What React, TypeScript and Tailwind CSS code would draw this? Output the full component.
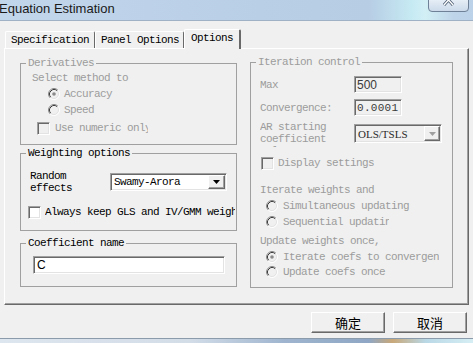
import React from "react";

const mono =
  "font-['Liberation_Mono',monospace] text-[11px] tracking-[-0.6px] leading-[12px]";
const sunken =
  "border-t border-l border-[#a0a0a0] border-b border-r border-b-white border-r-white shadow-[inset_1px_1px_0_#696969,inset_-1px_-1px_0_#e3e3e3]";
const raised =
  "border-t border-l border-white border-b border-r border-b-[#696969] border-r-[#696969] shadow-[inset_-1px_-1px_0_#a0a0a0]";

function Radio({ checked = false }: { checked?: boolean }) {
  return (
    <svg width="12" height="12" viewBox="0 0 12 12" className="shrink-0">
      <circle cx="6" cy="6" r="5" fill="#f0f0f0" />
      <path d="M2.11 9.89A5.5 5.5 0 0 1 9.89 2.11" stroke="#8a8a8a" fill="none" />
      <path d="M9.89 2.11A5.5 5.5 0 0 1 2.11 9.89" stroke="#ffffff" fill="none" />
      <path d="M2.82 9.18A4.5 4.5 0 0 1 9.18 2.82" stroke="#3c3c3c" fill="none" />
      <path d="M9.18 2.82A4.5 4.5 0 0 1 2.82 9.18" stroke="#e3e3e3" fill="none" />
      {checked && <circle cx="6" cy="6" r="1.8" fill="#8a8a8a" />}
    </svg>
  );
}

function Check({ enabled = false }: { enabled?: boolean }) {
  return (
    <div
      className={
        "w-[13px] h-[13px] shrink-0 " +
        sunken +
        (enabled ? " bg-white" : " bg-[#f0f0f0]")
      }
    />
  );
}

function Arrow({ color }: { color: string }) {
  return (
    <svg width="7" height="4" viewBox="0 0 7 4">
      <path d="M0 0h7L3.5 4z" fill={color} />
    </svg>
  );
}

export default function App() {
  return (
    <div className={"relative w-[473px] h-[343px] overflow-hidden bg-[#f0f0f0] flex flex-col text-black " + mono}>
      {/* title bar */}
      <div className="relative h-[21px] shrink-0 border-b border-[#9fb1c4] bg-[linear-gradient(90deg,#c2d6eb_0%,#b9cfe6_55%,#b7cde4_78%,#c6eaf3_87%,#d2eff5_90%,#bed4e9_96%,#bcd2e8_100%)]">
        <div className="ml-[-1px] pt-[1px] font-['Liberation_Sans',sans-serif] text-[13px] leading-[16px] tracking-normal text-[#1a1a1a]">
          Equation Estimation
        </div>
        <div className="absolute right-[4px] top-[-2px] w-[41px] h-[14px] rounded-b-[4px] border border-[#6f8197] bg-[linear-gradient(180deg,#e8eff7,#cbdaea)] flex justify-center overflow-hidden">
          <svg width="14" height="9" viewBox="0 0 14 9" className="mt-[-1px]">
            <path d="M2 -3L11 7M11 -3L2 7" stroke="#4a5b70" strokeWidth="3" />
            <path d="M2 -3L11 7M11 -3L2 7" stroke="#ffffff" strokeWidth="1.4" />
          </svg>
        </div>
      </div>

      {/* tabs */}
      <div className="relative z-10 mt-[8px] h-[19px] flex items-end pl-[5px]">
        <div className="w-[90px] h-[17px] border-t border-l border-white border-r border-r-[#696969] rounded-t-[2px] flex items-center pl-[5px]">
          Specification
        </div>
        <div className="w-[89px] h-[17px] border-t border-l border-white border-r border-r-[#696969] rounded-t-[2px] flex items-center pl-[5px]">
          Panel Options
        </div>
        <div className="w-[57px] h-[20px] mb-[-1px] bg-[#f0f0f0] border-t border-l border-white border-r-2 border-r-[#696969] rounded-t-[2px] pl-[6px] pt-[2px]">
          Options
        </div>
      </div>

      {/* panel */}
      <div className={"ml-[4px] w-[465px] h-[257px] shrink-0 flex items-start pl-[15px] gap-[13px] " + raised}>
        {/* left column */}
        <div className="w-[217px] mt-[8px] flex flex-col">
          <fieldset className="h-[88px] border border-[#a0a0a0] text-[#9c9c9c]">
            <legend className="ml-[5px] px-[2px]">Derivatives</legend>
            <div className="mt-[1px] h-[16px] pl-[11px] flex items-center">Select method to</div>
            <div className="h-[16px] pl-[27px] flex items-center gap-[4px]">
              <Radio checked />
              Accuracy
            </div>
            <div className="h-[16px] pl-[27px] flex items-center gap-[4px]">
              <Radio />
              Speed
            </div>
            <div className="h-[20px] pl-[16px] flex items-center gap-[5px]">
              <Check />
              <span className="w-[93px] overflow-hidden whitespace-nowrap">Use numeric only</span>
            </div>
          </fieldset>

          <fieldset className="mt-[2px] h-[84px] border border-[#a0a0a0]">
            <legend className="ml-[5px] px-[2px]">Weighting options</legend>
            <div className="mt-[11px] h-[24px] pl-[9px] flex items-center">
              <div className="w-[80px]">
                Random
                <br />
                effects
              </div>
              <div className={"w-[117px] h-[18px] bg-white flex items-center justify-between pl-[3px] pr-[1px] " + sunken}>
                <span>Swamy-Arora</span>
                <div className={"w-[17px] h-[14px] bg-[#f0f0f0] flex items-center justify-center " + raised}>
                  <Arrow color="#000" />
                </div>
              </div>
            </div>
            <div className="mt-[11px] h-[14px] pl-[7px] flex items-center gap-[4px]">
              <Check enabled />
              <span className="w-[190px] overflow-hidden whitespace-nowrap">Always keep GLS and IV/GMM weights</span>
            </div>
          </fieldset>

          <fieldset className="mt-[6px] h-[50px] border border-[#a0a0a0]">
            <legend className="ml-[5px] px-[2px]">Coefficient name</legend>
            <div className={"mt-[7px] ml-[12px] w-[192px] h-[18px] bg-white flex items-center pl-[3px] font-['Liberation_Sans',sans-serif] tracking-normal text-[12px] " + sunken}>
              C
            </div>
          </fieldset>
        </div>

        {/* right column */}
        <fieldset className="mt-[7px] w-[203px] h-[232px] border border-[#a0a0a0] text-[#9c9c9c]">
          <legend className="ml-[5px] px-[2px]">Iteration control</legend>
          <div className="mt-[8px] h-[17px] pl-[9px] flex items-center">
            <div className="w-[94px]">Max</div>
            <div className={"w-[48px] h-[17px] flex items-center pl-[2px] text-[#3a3a3a] font-['Liberation_Sans',sans-serif] tracking-normal text-[12px] " + sunken}>
              500
            </div>
          </div>
          <div className="mt-[6px] h-[17px] pl-[9px] flex items-center">
            <div className="w-[94px]">Convergence:</div>
            <div className={"w-[48px] h-[17px] flex items-center pl-[2px] text-[#3a3a3a] font-['Liberation_Mono',monospace] tracking-[0.3px] text-[11px] " + sunken}>
              0.0001
            </div>
          </div>
          <div className="mt-[5px] h-[28px] pl-[9px] flex items-start">
            <div className="w-[94px] h-[26px] overflow-hidden">
              AR starting
              <br />
              coefficient
              <br />
              values
            </div>
            <div className={"mt-[3px] w-[88px] h-[19px] flex items-center justify-between pl-[3px] pr-[1px] " + sunken}>
              <span className="font-['Liberation_Serif',serif] text-[11px] tracking-normal text-[#2a2a2a]">OLS/TSLS</span>
              <div className={"w-[16px] h-[15px] bg-[#f0f0f0] flex items-center justify-center " + raised}>
                <Arrow color="#a0a0a0" />
              </div>
            </div>
          </div>
          <div className="mt-[7px] h-[14px] pl-[10px] flex items-center gap-[4px]">
            <Check />
            Display settings
          </div>
          <div className="mt-[14px] h-[12px] pl-[9px]">Iterate weights and</div>
          <div className="mt-[2px] h-[16px] pl-[15px] flex items-center gap-[5px]">
            <Radio />
            Simultaneous updating
          </div>
          <div className="h-[16px] pl-[15px] flex items-center gap-[5px]">
            <Radio />
            <span className="w-[106px] overflow-hidden whitespace-nowrap">Sequential updating</span>
          </div>
          <div className="mt-[5px] h-[12px] pl-[9px]">Update weights once,</div>
          <div className="mt-[2px] h-[15px] pl-[15px] flex items-center gap-[5px]">
            <Radio checked />
            <span className="w-[156px] overflow-hidden whitespace-nowrap">Iterate coefs to convergence</span>
          </div>
          <div className="h-[15px] pl-[15px] flex items-center gap-[5px]">
            <Radio />
            Update coefs once
          </div>
        </fieldset>
      </div>

      {/* buttons */}
      <div className="mt-[7px] flex justify-end gap-[8px] pr-[6px] font-['Noto_Sans_CJK_SC',sans-serif] text-[13px] tracking-normal">
        <div className={"w-[74px] h-[21px] flex items-center justify-center bg-[#f0f0f0] " + raised}>确定</div>
        <div className={"w-[74px] h-[21px] flex items-center justify-center bg-[#f0f0f0] " + raised}>取消</div>
      </div>

      {/* desktop strip below the dialog */}
      <div className="mt-auto h-[5px] border-t border-[#8b9bab] bg-[linear-gradient(90deg,#dde5ee_0%,#d3dde8_40%,#9fb5cf_60%,#8fa7c4_78%,#c9a879_83%,#b9d8e6_90%,#d6eef4_100%)]" />
    </div>
  );
}
